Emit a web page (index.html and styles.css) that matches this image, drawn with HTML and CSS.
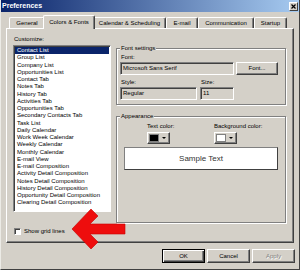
FILE: index.html
```html
<!DOCTYPE html>
<html>
<head>
<meta charset="utf-8">
<title>Preferences</title>
<link rel="stylesheet" href="styles.css">
</head>
<body>
<div class="window">
  <div class="titlebar">
    <span class="title">Preferences</span>
    <span class="close"><svg width="5" height="5" viewBox="0 0 5 5"><path d="M0.5 0.5L4.5 4.5M4.5 0.5L0.5 4.5" stroke="#000" stroke-width="1.2"/></svg></span>
  </div>
  <div class="tabs">
    <div class="tab t-general">General</div>
    <div class="tab t-colors active">Colors &amp; Fonts</div>
    <div class="tab t-calendar">Calendar &amp; Scheduling</div>
    <div class="tab t-email">E-mail</div>
    <div class="tab t-comm">Communication</div>
    <div class="tab t-startup">Startup</div>
  </div>
  <div class="panel">
    <div class="left">
      <div class="label">Customize:</div>
      <ul class="listbox">
        <li class="selected">Contact List</li>
        <li>Group List</li>
        <li>Company List</li>
        <li>Opportunities List</li>
        <li>Contact Tab</li>
        <li>Notes Tab</li>
        <li>History Tab</li>
        <li>Activities Tab</li>
        <li>Opportunities Tab</li>
        <li>Secondary Contacts Tab</li>
        <li>Task List</li>
        <li>Daily Calendar</li>
        <li>Work Week Calendar</li>
        <li>Weekly Calendar</li>
        <li>Monthly Calendar</li>
        <li>E-mail View</li>
        <li>E-mail Composition</li>
        <li>Activity Detail Composition</li>
        <li>Notes Detail Composition</li>
        <li>History Detail Composition</li>
        <li>Opportunity Detail Composition</li>
        <li>Clearing Detail Composition</li>
      </ul>
      <div class="check"><span class="checkbox"></span><span>Show grid lines</span></div>
    </div>
    <div class="right">
      <div class="group font-group">
        <span class="legend">Font settings</span>
        <div class="label">Font:</div>
        <div class="row">
          <div class="field f-font">Microsoft Sans Serif</div>
          <div class="btn b-font">Font...</div>
        </div>
        <div class="row row-labels">
          <div class="label c-style">Style:</div>
          <div class="label">Size:</div>
        </div>
        <div class="row">
          <div class="field f-style">Regular</div>
          <div class="field f-size">11</div>
        </div>
      </div>
      <div class="group appearance">
        <span class="legend">Appearance</span>
        <div class="colors">
          <div class="color-col c-text">
            <div class="label">Text color:</div>
            <div class="colorbtn"><span class="swatch sw-black"></span><span class="drop"><span class="tri"></span></span></div>
          </div>
          <div class="color-col">
            <div class="label">Background color:</div>
            <div class="colorbtn"><span class="swatch sw-white"></span><span class="drop"><span class="tri"></span></span></div>
          </div>
        </div>
        <div class="sample">Sample Text</div>
      </div>
    </div>
  </div>
  <div class="buttons">
    <div class="btn b-dlg default">OK</div>
    <div class="btn b-dlg">Cancel</div>
    <div class="btn b-dlg disabled">Apply</div>
  </div>
  <svg class="arrow" width="56" height="44" viewBox="0 0 56 44">
    <polygon points="1,22 20,2 27,9 19,17 54,17 54,27 19,27 27,35 20,42" fill="#ee0d0d" stroke="#c80000" stroke-width="0.6"/>
  </svg>
</div>
</body>
</html>
```

FILE: styles.css
```css
* { box-sizing: border-box; margin: 0; padding: 0; }
html, body { width: 300px; height: 270px; overflow: hidden; }
body {
  background: #d4d0c8;
  font-family: "Liberation Sans", Arial, sans-serif;
  font-size: 6px;
  color: #000;
}
.window {
  position: relative;
  width: 300px;
  height: 270px;
  border-left: 1px solid #ecebe6;
  border-right: 1px solid #404040;
  border-bottom: 1px solid #404040;
  display: flex;
  flex-direction: column;
}
.titlebar {
  height: 12px;
  flex: none;
  background: linear-gradient(to right, #0a246a, #a6caf0);
  display: flex;
  align-items: center;
  justify-content: space-between;
  padding: 0 1px 0 1px;
}
.title { color: #fff; font-weight: bold; font-size: 7px; line-height: 12px; }
.close {
  width: 9px; height: 9px;
  background: #d4d0c8;
  border: 1px solid;
  border-color: #fff #404040 #404040 #fff;
  display: flex; align-items: center; justify-content: center;
}
.close svg { display: block; }

.tabs {
  height: 16px;
  flex: none;
  display: flex;
  align-items: flex-end;
  padding-left: 8px;
}
.tab {
  height: 11px;
  border: 1px solid;
  border-bottom: none;
  border-color: #fff #404040 #404040 #fff;
  border-radius: 2px 2px 0 0;
  box-shadow: inset -1px 0 0 #808080;
  text-align: center;
  line-height: 8px;
  padding-top: 1px;
  white-space: nowrap;
}
.t-general { width: 36px; }
.t-colors { width: 48px; }
.t-calendar { width: 73px; }
.t-email { width: 32px; }
.t-comm { width: 56px; }
.t-startup { width: 33px; }
.tab.active {
  position: relative;
  z-index: 1;
  height: 14px;
  width: 52px;
  margin: 0 -2px -1px -2px;
  background: #d4d0c8;
  padding-top: 2px;
}

.panel {
  margin-left: 5px;
  width: 288px;
  height: 215px;
  flex: none;
  border: 1px solid;
  border-color: #fff #404040 #404040 #fff;
  box-shadow: inset -1px -1px 0 #808080;
  display: grid;
  grid-template-columns: 98px 170px;
  column-gap: 5px;
  padding-left: 6px;
  align-items: start;
}
.label { line-height: 8px; white-space: nowrap; }
.left { padding-top: 6px; }
.left > .label { margin-bottom: 2px; padding-left: 1px; }
.listbox {
  list-style: none;
  height: 167px;
  background: #fff;
  border: 1px solid;
  border-color: #808080 #fff #fff #808080;
  box-shadow: inset 1px 1px 0 #404040;
  padding: 1px;
}
.listbox li { line-height: 7.25px; height: 7.25px; padding-left: 2px; white-space: nowrap; }
.listbox li.selected { background: #0a246a; color: #fff; }
.check {
  margin-top: 15px;
  height: 8px;
  display: flex;
  align-items: center;
  gap: 3px;
  padding-left: 1px;
}
.checkbox {
  width: 7px; height: 7px;
  background: #fff;
  border: 1px solid;
  border-color: #808080 #fff #fff #808080;
  box-shadow: inset 1px 1px 0 #404040;
}

.right { padding-top: 19px; }
.group {
  position: relative;
  border: 1px solid #808080;
  box-shadow: inset 1px 1px 0 #fff, 1px 1px 0 #fff;
}
.legend {
  position: absolute;
  top: -4px;
  left: 3px;
  padding: 0 1px;
  line-height: 7px;
  background: #d4d0c8;
}
.font-group { padding: 4px 0 4px 3px; }
.font-group > .label { padding-left: 1px; }
.row { display: flex; gap: 3px; margin-top: 1px; }
.row-labels { margin-top: 3px; }
.row-labels .label { padding-left: 1px; }
.c-style { width: 77px; }
.field {
  height: 13px;
  border: 1px solid;
  border-color: #808080 #fff #fff #808080;
  box-shadow: inset 1px 1px 0 #404040;
  line-height: 11px;
  padding-left: 2px;
  white-space: nowrap;
}
.f-font { width: 114px; }
.f-style { width: 77px; }
.f-size { width: 34px; }
.btn {
  height: 13px;
  border: 1px solid;
  border-color: #fff #404040 #404040 #fff;
  box-shadow: inset -1px -1px 0 #808080;
  text-align: center;
  line-height: 11px;
}
.b-font { width: 42px; margin-left: -1px; }

.appearance { margin-top: 11px; height: 107px; padding-top: 5px; }
.colors { display: flex; padding-left: 30px; }
.color-col { display: flex; flex-direction: column; gap: 2px; }
.c-text { width: 67px; }
.colorbtn {
  width: 23px; height: 12px;
  display: flex;
  border: 1px solid;
  border-color: #fff #404040 #404040 #fff;
  box-shadow: inset -1px -1px 0 #808080;
  padding: 1px;
}
.swatch { width: 10px; border: 1px solid #808080; }
.sw-black { background: #000; }
.sw-white { background: #fff; }
.drop { flex: 1; display: flex; align-items: center; justify-content: center; }
.tri {
  width: 0; height: 0;
  border-left: 2px solid transparent;
  border-right: 2px solid transparent;
  border-top: 2px solid #000;
}
.sample {
  margin: 3px 0 0 7px;
  width: 154px;
  height: 23px;
  background: #fff;
  border: 1px solid;
  border-color: #808080 #404040 #404040 #808080;
  font-size: 8px;
  color: #333;
  display: flex;
  align-items: center;
  justify-content: center;
}

.buttons {
  margin-top: 6px;
  display: flex;
  justify-content: flex-end;
  gap: 2px;
  padding-right: 4px;
}
.b-dlg { width: 43px; height: 14px; line-height: 12px; }
.b-dlg.default {
  border-color: #000;
  box-shadow: inset 1px 1px 0 #fff, inset -1px -1px 0 #404040, inset -2px -2px 0 #808080;
}
.b-dlg.disabled { color: #808080; text-shadow: 1px 1px 0 #fff; }

.arrow { position: absolute; left: 70px; top: 207px; }
```
